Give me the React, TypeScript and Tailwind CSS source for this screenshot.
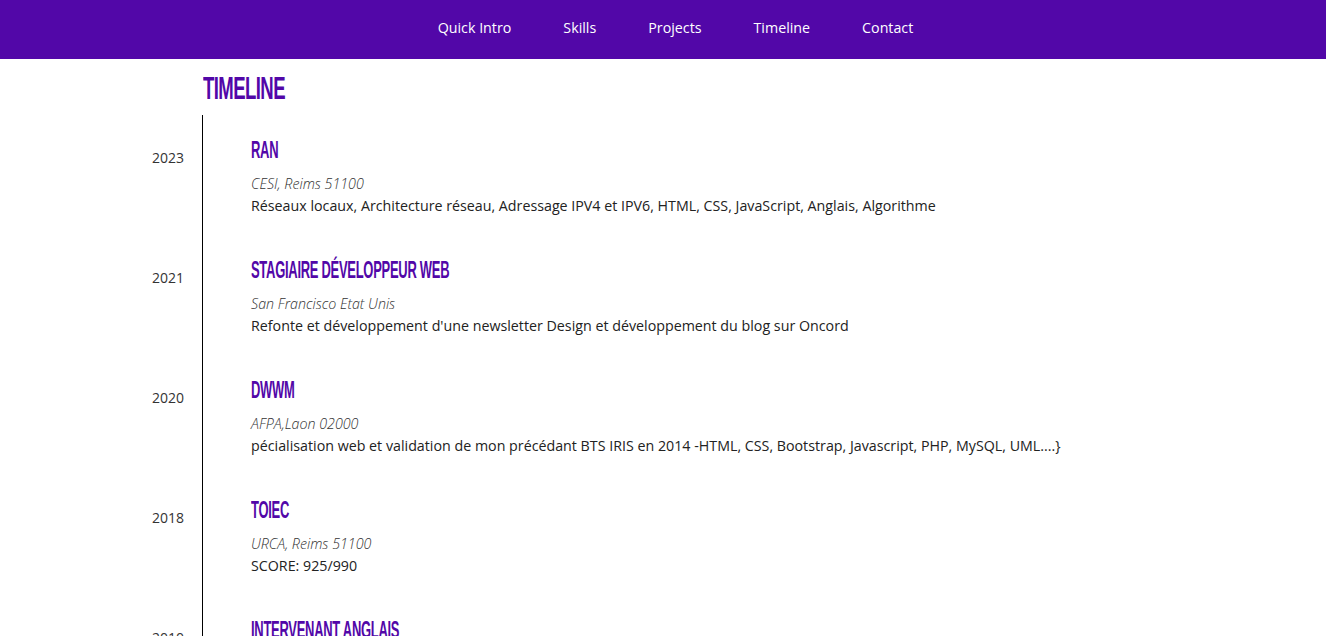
import React from "react";

const items = [
  { year: "2023", title: "RAN", place: "CESI, Reims 51100", desc: "Réseaux locaux, Architecture réseau, Adressage IPV4 et IPV6, HTML, CSS, JavaScript, Anglais, Algorithme" },
  { year: "2021", title: "Stagiaire Développeur Web", place: "San Francisco Etat Unis", desc: "Refonte et développement d'une newsletter Design et développement du blog sur Oncord" },
  { year: "2020", title: "DWWM", place: "AFPA,Laon 02000", desc: "pécialisation web et validation de mon précédant BTS IRIS en 2014 -HTML, CSS, Bootstrap, Javascript, PHP, MySQL, UML....}" },
  { year: "2018", title: "TOIEC", place: "URCA, Reims 51100", desc: "SCORE: 925/990" },
  { year: "2010", title: "Intervenant Anglais", place: "Reims", desc: "Cours d'anglais" },
];

const heading = "font-['Liberation_Sans_Narrow','Liberation_Sans',sans-serif] font-bold uppercase text-[#5207a8]";

export default function App() {
  return (
    <div className="min-h-[636px] bg-white font-['Open_Sans',sans-serif] text-[#222]">
      <nav className="h-[59px] bg-[#5207a8] flex items-center justify-center gap-[52px] text-white text-[14.25px] pl-[25px] pb-[4px]">
        <span>Quick Intro</span>
        <span>Skills</span>
        <span>Projects</span>
        <span>Timeline</span>
        <span>Contact</span>
      </nav>
      <section className="pt-[12px]">
        <h2 className={`${heading} ml-[203px] text-[32px] leading-[34px] tracking-[-1px] origin-left scale-x-[0.58] inline-block`}>Timeline</h2>
        <div className="mt-[10px]">
          {items.map((it) => (
            <div key={it.year} className="flex h-[120px]">
              <div className="w-[184px] text-right text-[14px] pt-[32px] text-[#333]">{it.year}</div>
              <div className="ml-[18px] border-l border-black pl-[48px] pt-[22px] flex-1">
                <div className={`${heading} text-[24px] leading-[26px] tracking-[-0.5px] origin-left scale-x-[0.54] whitespace-nowrap`}>{it.title}</div>
                <div className="mt-[10px] text-[14.25px] leading-[22px] italic font-light text-[#333]">{it.place}</div>
                <div className="text-[14.25px] leading-[22px] text-[#222]">{it.desc}</div>
              </div>
            </div>
          ))}
        </div>
      </section>
    </div>
  );
}
